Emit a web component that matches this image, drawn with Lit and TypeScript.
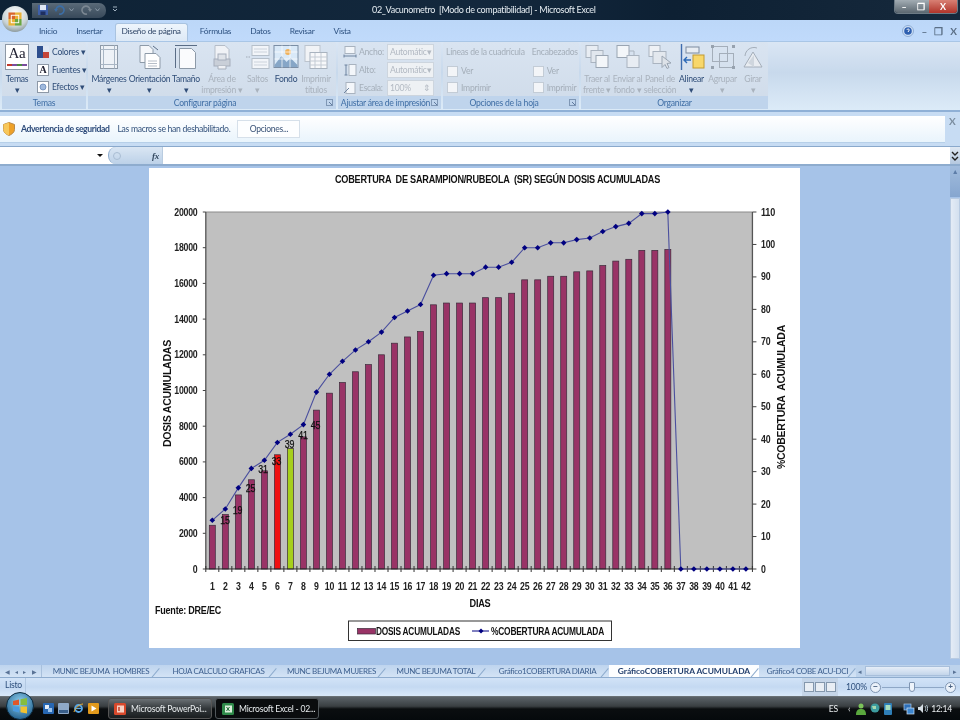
import { LitElement, html, svg, css } from "lit";
import { customElement } from "lit/decorators.js";

const DOSES = [2450,3050,4150,5000,5500,6400,6750,7400,8900,9850,10450,11050,11450,12000,12650,13000,13300,14800,14900,14900,14900,15200,15200,15450,16200,16200,16400,16400,16650,16700,17000,17250,17350,17850,17850,17900];
const COVER = [15,18.5,25,31,33.5,39,41.5,44.5,54.5,60,64,67.5,70,73,77.5,79.5,81.5,90.5,91,91,91,93,93,94.5,99,99,100.5,100.5,101.5,102,104,105.5,106.5,109.5,109.5,110,0,0,0,0,0,0];
const LABELS: [string, number, number][] = [["15",225,524],["19",237.5,514],["25",250.5,492],["31",263,473],["33",276.5,465],["39",289.5,448],["41",303,439],["45",315.5,429]];
const L = 205.8, STEP = 13.015, Y0 = 569, H = 357;
const cx = (i: number) => L + STEP * (i + 0.5);
const yD = (v: number) => Y0 - (v / 20000) * H;
const yC = (v: number) => Y0 - (v / 110) * H;

const ic = {
  orb: html`<svg viewBox="0 0 30 30" width="28" height="28"><defs><radialGradient id="og" cx=".5" cy=".3" r=".75"><stop offset="0" stop-color="#fff"/><stop offset=".65" stop-color="#c9d3d6"/><stop offset="1" stop-color="#7f8d8f"/></radialGradient></defs><circle cx="15" cy="15" r="14" fill="url(#og)"/><rect x="8" y="8" width="7" height="7" fill="#d9662b"/><rect x="15" y="8" width="7" height="7" fill="#e8b23a"/><rect x="8" y="15" width="7" height="7" fill="#e8b23a"/><rect x="15" y="15" width="7" height="7" fill="#6aa63f"/><rect x="11" y="11" width="8" height="8" fill="none" stroke="#fff" stroke-width="1"/></svg>`,
  save: html`<svg viewBox="0 0 10 10" width="10" height="10"><rect width="10" height="10" fill="#3d5fa8"/><rect x="2" y="0" width="6" height="5" fill="#dfe8f5"/><rect x="2.5" y="6.5" width="5" height="3.5" fill="#1e2f60"/></svg>`,
  undo: html`<svg viewBox="0 0 12 10" width="12" height="10"><path d="M2 5a4 4 0 1 1 3 4" fill="none" stroke="#3c6ea6" stroke-width="1.6"/><path d="M0 4h4l-2 3z" fill="#3c6ea6"/></svg>`,
  redo: html`<svg viewBox="0 0 12 10" width="12" height="10"><path d="M10 5a4 4 0 1 0-3 4" fill="none" stroke="#7b8792" stroke-width="1.6"/><path d="M12 4H8l2 3z" fill="#7b8792"/></svg>`,
  chev: html`<svg viewBox="0 0 5 4" width="5" height="4"><path d="M.5 .5L2.500 3 4.500 .5" fill="none" stroke="#8d9ba8"/></svg>`,
  qa: html`<svg viewBox="0 0 6 8" width="6" height="8"><path d="M1 1h4M1 3l2 2 2-2" fill="none" stroke="#9fb0bf" stroke-width="1"/></svg>`,
  aa: html`<svg viewBox="0 0 24 26" width="24" height="26"><rect x=".5" y=".5" width="23" height="25" fill="#fff" stroke="#8d98a6"/><rect x="2" y="20" width="20" height="2" fill="#7a4d9e"/><rect x="2" y="20" width="5" height="2" fill="#c0392b"/><rect x="12" y="20" width="5" height="2" fill="#4a8a3f"/></svg>`,
  colors: html`<svg viewBox="0 0 12 12" width="12" height="12"><rect width="6" height="12" fill="#2e4f8e"/><rect x="6" width="6" height="6" fill="#dfe7f3"/><rect x="6" y="6" width="6" height="6" fill="#c44539"/></svg>`,
  effects: html`<svg viewBox="0 0 12 12" width="12" height="12"><rect x=".5" y=".5" width="11" height="11" fill="#fff" stroke="#8d98a6"/><circle cx="6" cy="6" r="3" fill="#9fb9dd" stroke="#5c7eb0" stroke-width=".7"/></svg>`,
  margins: html`<svg viewBox="0 0 26 26" width="26" height="26"><rect x="4.500" y="1.500" width="17" height="23" fill="#eef2f7" stroke="#8d9aa8"/><path d="M4.500 5.500h17M4.500 20.500h17M7.500 1.500v23M18.500 1.500v23" stroke="#a9b6c4"/></svg>`,
  orient: html`<svg viewBox="0 0 26 26" width="26" height="26"><path d="M3 1.500h9l4 4v13H3z" fill="#f5f7fa" stroke="#8d9aa8"/><path d="M8 9.500h11l4 4v11H8z" fill="#fff" stroke="#8d9aa8"/><path d="M11 17h9M11 19.500h9M11 22h9" stroke="#b6bec8"/><path d="M16 2l5 4" stroke="#5a6d86"/></svg>`,
  size: html`<svg viewBox="0 0 26 26" width="26" height="26"><path d="M2 1.500h22" stroke="#5a6d86"/><path d="M2.500 4v20" stroke="#5a6d86"/><path d="M6.500 4.500h12l4 4v16h-16z" fill="#fafbfd" stroke="#8d9aa8"/></svg>`,
  area: html`<svg viewBox="0 0 26 26" width="26" height="26"><path d="M6 1.500h10l4 4v13H6z" fill="#f0f2f6" stroke="#b5bdc8"/><rect x="5" y="15" width="16" height="7" fill="#c9cfd8" stroke="#a6aebb"/><rect x="9" y="10" width="8" height="6" fill="#dfe3e9" stroke="#a6aebb"/><path d="M9 22v3h8v-3" fill="#eef0f4" stroke="#a6aebb"/></svg>`,
  breaks: html`<svg viewBox="0 0 26 26" width="26" height="26"><rect x="7" y="1.500" width="17" height="10" fill="#f2f5f9" stroke="#b5bfca"/><rect x="7" y="14.500" width="17" height="10" fill="#f2f5f9" stroke="#b5bfca"/><path d="M9 5h13M9 8h13M9 18h13M9 21h13" stroke="#ccd3dc"/><path d="M1 13h4" stroke="#a0aab6" stroke-dasharray="1.500 1"/></svg>`,
  bg: html`<svg viewBox="0 0 26 26" width="26" height="26"><rect x="1" y="1.500" width="24" height="22" fill="#d9e9f8" stroke="#7b8ea5"/><path d="M1.500 21l7-9 5 6 4-4 7 7v2h-23z" fill="#86a6c7"/><circle cx="15" cy="8" r="3" fill="#f0b25c"/><path d="M1.500 8h23M1.500 15h23M9 1.500v22M17 1.500v22" stroke="#fff" stroke-width=".7"/></svg>`,
  titles: html`<svg viewBox="0 0 26 26" width="26" height="26"><rect x="2" y="1.500" width="15" height="16" fill="#f1f3f6" stroke="#bcc4ce"/><rect x="7" y="8.500" width="17" height="16" fill="#f7f8fa" stroke="#a9b3bf"/><path d="M7 13h17M7 17h17M7 21h17M12 9v15M18 9v15" stroke="#c4cbd4"/></svg>`,
  width: html`<svg viewBox="0 0 14 12" width="14" height="12"><rect x="2" y=".5" width="10" height="7" fill="#f3f6fa" stroke="#a9b3bf"/><path d="M1 10h12M1 8.500v3M13 8.500v3" stroke="#6f84a0"/></svg>`,
  height: html`<svg viewBox="0 0 14 12" width="14" height="12"><rect x="6" y=".5" width="7" height="11" fill="#f3f6fa" stroke="#a9b3bf"/><path d="M3 1v10M1.500 1h3M1.500 11h3" stroke="#6f84a0"/></svg>`,
  scale: html`<svg viewBox="0 0 14 12" width="14" height="12"><rect x="3" y=".5" width="9" height="11" fill="#f3f6fa" stroke="#a9b3bf"/><path d="M1 11l5-5" stroke="#6f84a0"/></svg>`,
  front: html`<svg viewBox="0 0 26 26" width="26" height="26"><rect x="2" y="1.500" width="12" height="12" fill="#e8edf3" stroke="#aab4c0"/><rect x="7" y="6.500" width="12" height="12" fill="#e1e7ee" stroke="#aab4c0"/><rect x="12" y="11.500" width="12" height="12" fill="#f3f6f9" stroke="#9aa5b2"/></svg>`,
  back: html`<svg viewBox="0 0 26 26" width="26" height="26"><rect x="2" y="1.500" width="12" height="12" fill="#f3f6f9" stroke="#9aa5b2"/><rect x="12" y="11.500" width="12" height="12" fill="#e8edf3" stroke="#aab4c0"/><path d="M14 7h5v5" fill="none" stroke="#aab4c0"/></svg>`,
  pane: html`<svg viewBox="0 0 26 26" width="26" height="26"><rect x="2" y="1.500" width="11" height="11" fill="#eef1f5" stroke="#aab4c0"/><rect x="6" y="7.500" width="13" height="12" fill="#e3e8ee" stroke="#aab4c0"/><path d="M15 12l9 7-4 .5 2 4-2 1-2-4-3 3z" fill="#dde2e8" stroke="#9aa5b2"/></svg>`,
  align: html`<svg viewBox="0 0 26 26" width="26" height="26"><path d="M2.500 0v26" stroke="#3e6cae" stroke-width="1.400"/><rect x="7" y="3" width="13" height="6" fill="#e8edf3" stroke="#7d8ba0"/><rect x="14" y="11" width="11" height="13" fill="#f8d76a" stroke="#c29a31"/><path d="M12 16H6m2-3-3 3 3 3" fill="none" stroke="#2d6ab7" stroke-width="1.400"/></svg>`,
  group: html`<svg viewBox="0 0 26 26" width="26" height="26"><rect x="2.500" y="2.500" width="15" height="15" fill="none" stroke="#a4aeba"/><rect x="9.500" y="9.500" width="14" height="14" fill="none" stroke="#a4aeba"/><g fill="#97a2af"><rect x="1" y="1" width="3" height="3"/><rect x="22" y="1" width="3" height="3"/><rect x="1" y="22" width="3" height="3"/><rect x="22" y="22" width="3" height="3"/></g></svg>`,
  rotate: html`<svg viewBox="0 0 26 26" width="26" height="26"><path d="M13 8l9 15H4z" fill="#e8ecf1" stroke="#a4aeba"/><path d="M5 12a9 9 0 0 1 12-8" fill="none" stroke="#a4aeba"/><path d="M8 19l6-8v12" fill="#cfd6de"/></svg>`,
  launcher: html`<svg viewBox="0 0 7 7" width="7" height="7"><rect x=".5" y=".5" width="6" height="6" fill="none" stroke="#7f97b5"/><path d="M3 3l3 3" stroke="#5f7a9e"/></svg>`,
  shield: html`<svg viewBox="0 0 12 14" width="12" height="14"><path d="M6 .5l5.500 2v5c0 3-3 5-5.500 6-2.500-1-5.500-3-5.500-6v-5z" fill="#eea129" stroke="#b88a4a"/><path d="M6 .5v13c-2.500-1-5.500-3-5.500-6v-5z" fill="#f7c75a"/></svg>`,
  fx: html`<svg viewBox="0 0 10 10" width="10" height="10"><circle cx="5" cy="5" r="3.500" fill="none" stroke="#a9bdd3"/></svg>`,
  help: html`<svg viewBox="0 0 12 12" width="12" height="12"><circle cx="6" cy="6" r="5.500" fill="#cfe0f5" stroke="#8fadd4"/><circle cx="6" cy="6" r="3.800" fill="#2e5fb0"/><path d="M4.800 4.800c.5-1.200 2.500-1 2.500.2 0 1-1.300 1-1.300 2" stroke="#fff" fill="none"/></svg>`,
  expand: html`<svg viewBox="0 0 8 10" width="8" height="10"><path d="M1 1l3 3 3-3M1 6l3 3 3-3" fill="none" stroke="#222" stroke-width="1.400"/></svg>`,
  start: html`<svg viewBox="0 0 28 28" width="28" height="28"><defs><radialGradient id="st" cx=".5" cy=".35" r=".7"><stop offset="0" stop-color="#8fd0ee"/><stop offset="1" stop-color="#1c5a89"/></radialGradient></defs><circle cx="14" cy="14" r="13.500" fill="url(#st)" stroke="#0c2a3e"/><path d="M7 9l6-1.500V13H7z" fill="#e1572a"/><path d="M14.500 7.200L21 6v7h-6.500z" fill="#86bd3f"/><path d="M7 14.500h6v6L7 19z" fill="#4a9adf"/><path d="M14.500 14.500H21v7l-6.500-1.200z" fill="#f2c230"/></svg>`,
  ql1: html`<svg viewBox="0 0 11 11" width="11" height="11"><rect width="11" height="11" rx="1" fill="#2767b3"/><rect x="2" y="2" width="4" height="4" fill="#e6eef8"/><rect x="5" y="5" width="4" height="4" fill="#9dc3ea"/></svg>`,
  ql2: html`<svg viewBox="0 0 11 11" width="11" height="11"><rect width="11" height="11" rx="1" fill="#8fa9c7"/><rect x="1" y="7" width="9" height="3" fill="#3a5f8a"/></svg>`,
  ie: html`<svg viewBox="0 0 11 11" width="11" height="11"><circle cx="5.500" cy="5.500" r="3.500" fill="none" stroke="#59a8e8" stroke-width="1.800"/><path d="M2.500 5.500h6" stroke="#59a8e8" stroke-width="1.300"/><path d="M1 9c1-4 6-8 9-8" fill="none" stroke="#f0b030"/></svg>`,
  ql4: html`<svg viewBox="0 0 11 11" width="11" height="11"><rect width="11" height="11" rx="1" fill="#e29a1c"/><path d="M3.500 2.500l5 3-5 3z" fill="#fff"/></svg>`,
  ppt: html`<svg viewBox="0 0 12 12" width="12" height="12"><rect width="12" height="12" rx="1.500" fill="#d8492c"/><rect x="3" y="2.500" width="7" height="7" fill="#f6d0c3"/><path d="M5 4v4" stroke="#c2331a" stroke-width="1.400"/></svg>`,
  xl: html`<svg viewBox="0 0 12 12" width="12" height="12"><rect width="12" height="12" rx="1.500" fill="#2f8a4a"/><rect x="3" y="2.500" width="7" height="7" fill="#dcefdc"/><path d="M4.500 4l3 4m0-4l-3 4" stroke="#1d6a34"/></svg>`,
  user: html`<svg viewBox="0 0 10 12" width="10" height="12"><circle cx="5" cy="3" r="2.500" fill="#7cc35a"/><path d="M0 12c0-5 2-6 5-6s5 1 5 6z" fill="#5aa83e"/></svg>`,
  globe: html`<svg viewBox="0 0 10 10" width="10" height="10"><circle cx="5" cy="5" r="4.500" fill="#3d9c9f"/><path d="M2 3h4v3H3z" fill="#a7d8b0"/></svg>`,
  phone: html`<svg viewBox="0 0 8 12" width="8" height="12"><rect width="8" height="12" rx="1" fill="#2f7fb8"/><rect x="1.500" y="2" width="5" height="5" fill="#a9e0c0"/></svg>`,
  net: html`<svg viewBox="0 0 12 12" width="12" height="12"><rect x="1" y="1" width="7" height="6" fill="#2e6fb8" stroke="#a9c8e8" stroke-width=".7"/><rect x="4" y="5" width="7" height="6" fill="#3d86cf" stroke="#d3e4f5" stroke-width=".7"/></svg>`,
  vol: html`<svg viewBox="0 0 11 11" width="11" height="11"><path d="M1 4h2l3-3v9L3 7H1z" fill="#d5dde3"/><path d="M8 3c1 1.500 1 3.500 0 5M9.500 2c1.500 2 1.500 5 0 7" stroke="#b6c4ce" fill="none"/></svg>`,
};

@customElement("x-chart")
class XChart extends LitElement {
  static styles = css`
    :host { display: block; width: 651px; height: 480px; background: #fff; }
    svg { display: block; }
    text { font-family: "Liberation Sans", Arial, sans-serif; font-weight: 700; fill: #222; white-space: pre; }
    .n { font-size: 10px; }
    .v { font-size: 11px; font-weight: 400; fill: #111; stroke: #111; stroke-width: .25px; }
    .t { font-size: 10px; fill: #111; }
  `;
  num(x: number, y: number, s: string, a: string) {
    return svg`<text class="n" x=${x} y=${y} text-anchor=${a} textLength=${s.length * 4.65} lengthAdjust="spacingAndGlyphs">${s}</text>`;
  }
  ttl(x: number, y: number, s: string, w: number, a = "start") {
    return svg`<text class="t" x=${x} y=${y} text-anchor=${a} textLength=${w} lengthAdjust="spacingAndGlyphs">${s}</text>`;
  }
  render() {
    const R = L + STEP * 42;
    const pts = COVER.map((c, i) => `${cx(i).toFixed(1)},${yC(c).toFixed(1)}`).join(" ");
    return html`<svg viewBox="149 168 651 480" width="651" height="480">
      <rect x=${L} y="212" width=${R - L} height=${H} fill="#c0c0c0"/>
      <path d="M${L} 212H${R}" stroke="#8a8a8a"/>
      ${DOSES.map((d, i) => svg`<rect x=${cx(i) - 3} y=${yD(d)} width="6" height=${Y0 - yD(d)} fill=${i === 5 ? "#f01010" : i === 6 ? "#a6cf1c" : "#993366"} stroke="#3b2a3a" stroke-width=".7"/>`)}
      <path d="M${L} 212V569M${R} 212V569" stroke="#555" stroke-width="1.300"/>
      <path d="M${L} 569H${R}" stroke="#222" stroke-width="1.100"/>
      ${Array.from({ length: 11 }, (_, i) => svg`<path d="M${L - 3} ${Y0 - (i * H) / 10}h3" stroke="#444"/>`)}
      ${Array.from({ length: 12 }, (_, i) => svg`<path d="M${R} ${Y0 - (i * H) / 11}h4" stroke="#444"/>`)}
      ${Array.from({ length: 43 }, (_, i) => svg`<path d="M${L + STEP * i} 566v6" stroke="#333"/>`)}
      <polyline points=${pts} fill="none" stroke="#4a4f9e" stroke-width="1.100"/>
      ${COVER.map((c, i) => svg`<path d="M${cx(i)} ${yC(c) - 2.800}l2.800 2.800-2.800 2.800-2.800-2.800z" fill="#000080"/>`)}
      ${LABELS.map(([s, x, y]) => svg`<text class="v" x=${x} y=${y} text-anchor="middle" textLength="9.500" lengthAdjust="spacingAndGlyphs">${s}</text>`)}
      ${Array.from({ length: 11 }, (_, i) => this.num(197.5, Y0 - (i * H) / 10 + 3.500, String(i * 2000), "end"))}
      ${Array.from({ length: 12 }, (_, i) => this.num(761, Y0 - (i * H) / 11 + 3.500, String(i * 10), "start"))}
      ${Array.from({ length: 42 }, (_, i) => this.num(cx(i), 590, String(i + 1), "middle"))}
      ${this.ttl(335, 183, "COBERTURA  DE SARAMPION/RUBEOLA  (SR) SEGÚN DOSIS ACUMULADAS", 325)}
      <g transform="translate(170.500 393.500) rotate(-90)">${this.ttl(0, 0, "DOSIS ACUMULADAS", 107, "middle")}</g>
      <g transform="translate(785 397) rotate(-90)">${this.ttl(0, 0, "%COBERTURA  ACUMULADA", 144, "middle")}</g>
      ${this.ttl(480, 607, "DIAS", 21, "middle")}
      ${this.ttl(155, 614, "Fuente: DRE/EC", 66)}
      <rect x="348.500" y="621" width="263" height="19.500" fill="#fff" stroke="#333"/>
      <rect x="357.500" y="628.500" width="18" height="5.500" fill="#993366" stroke="#3b2a3a" stroke-width=".7"/>
      ${this.ttl(376, 635, "DOSIS ACUMULADAS", 84)}
      <path d="M472 631h17" stroke="#000080"/>
      <path d="M481 628.500l2.500 2.500-2.500 2.500-2.500-2.500z" fill="#000080"/>
      ${this.ttl(491, 635, "%COBERTURA ACUMULADA", 113)}
    </svg>`;
  }
}

const BIG = [
  { w: 38, i: ic.margins, a: "Márgenes", b: "▾", on: 1 },
  { w: 43, i: ic.orient, a: "Orientación", b: "▾", on: 1 },
  { w: 30, i: ic.size, a: "Tamaño", b: "▾", on: 1 },
  { w: 42, i: ic.area, a: "Área de", b: "impresión ▾", on: 0 },
  { w: 29, i: ic.breaks, a: "Saltos", b: "▾", on: 0 },
  { w: 28, i: ic.bg, a: "Fondo", b: "", on: 1 },
  { w: 32, i: ic.titles, a: "Imprimir", b: "títulos", on: 0 },
];
const ARR = [
  { w: 30, i: ic.front, a: "Traer al", b: "frente ▾", on: 0 },
  { w: 31, i: ic.back, a: "Enviar al", b: "fondo ▾", on: 0 },
  { w: 34, i: ic.pane, a: "Panel de", b: "selección", on: 0 },
  { w: 29, i: ic.align, a: "Alinear", b: "▾", on: 1 },
  { w: 33, i: ic.group, a: "Agrupar", b: "▾", on: 0 },
  { w: 28, i: ic.rotate, a: "Girar", b: "▾", on: 0 },
];
const SHEETS = [
  { t: "MUNIC BEJUMA  HOMBRES", w: 118 },
  { t: "HOJA CALCULO GRAFICAS", w: 117 },
  { t: "MUNC BEJUMA MUJERES", w: 109 },
  { t: "MUNC BEJUMA TOTAL", w: 100 },
  { t: "Gráfico1COBERTURA DIARIA", w: 123 },
  { t: "GráficoCOBERTURA ACUMULADA", w: 150, on: 1 },
  { t: "Gráfico4 COBE ACU-DCI", w: 97 },
];

@customElement("app-root")
class AppRoot extends LitElement {
  static styles = css`
    :host { display: block; width: 960px; height: 720px; overflow: hidden; font-family: Lato, "Liberation Sans", sans-serif; font-size: 8.6px; letter-spacing: -.25px; color: #3b5578; filter: blur(.35px); }
    .win { display: flex; flex-direction: column; height: 720px; background: #a6c3e8; }
    .title { height: 20px; flex: none; display: flex; align-items: center; background: linear-gradient(90deg, #0e2235, #13283d 50%, #0d2033 70%, #16293c); color: #e6edf2; font-size: 9px; position: relative; }
    .orb { position: absolute; left: 1px; top: 5px; }
    .qat { margin-left: 32px; height: 15px; display: flex; align-items: center; gap: 3px; padding: 0 6px 0 6px; background: linear-gradient(#5a6a78, #38495a); border-radius: 0 7px 7px 0; }
    .qat svg:nth-child(1), .qat svg:nth-child(3) { margin-right: 3px; }
    .qa { margin-left: 6px; display: flex; }
    .caption { position: absolute; left: 372px; top: 4px; white-space: pre; letter-spacing: -.32px; }
    .wbtn { margin-left: auto; margin-right: 2px; align-self: flex-start; display: flex; height: 13px; border: 1px solid #6d7b86; border-top: 0; border-radius: 0 0 4px 4px; overflow: hidden; }
    .wbtn span { display: flex; align-items: center; justify-content: center; background: linear-gradient(#a2acb3, #5b6770); color: #fff; font-size: 9px; font-weight: 700; }
    .wbtn .m { width: 18px; } .wbtn .r { width: 16px; }
    .wbtn .x { width: 28px; background: linear-gradient(#d88074, #b0342a); }
    .tabs { height: 21px; flex: none; display: flex; align-items: flex-end; padding-left: 29.5px; background: linear-gradient(#bcd7f8, #c0dafb); color: #2d5180; font-size: 8.4px; }
    .tab { padding: 0 9.5px; height: 17px; line-height: 15px; white-space: nowrap; }
    .tab.on { background: linear-gradient(#eef5fc, #dde9f6); border: 1px solid #a9c3e0; border-bottom: 0; border-radius: 3px 3px 0 0; color: #33496a; padding: 0 6px; margin: 0 2.500px; }
    .help { margin-left: auto; display: flex; gap: 7px; align-items: center; align-self: center; padding-right: 3px; color: #5b6f86; font-size: 10px; font-weight: 700; letter-spacing: 0; }
    .ribbon { height: 71px; flex: none; display: flex; padding: 0 2px 1px 2px; gap: 2px; background: linear-gradient(#dae6f4, #c8d9ec 45%, #dcebf8); border-bottom: 2px solid #8fb0d6; border-top: 1px solid #a9c6e6; box-sizing: border-box; }
    .grp { display: flex; flex-direction: column; background: linear-gradient(#d9e4f1, #cfdbe9); border-radius: 2px; }
    .gb { flex: 1; display: flex; min-height: 0; padding-top: 2px; }
    .gl { height: 13px; flex: none; background: #bfd4ec; color: #3f6ea5; display: flex; align-items: center; justify-content: center; position: relative; font-size: 8.6px; white-space: nowrap; }
    .gl.p { padding-right: 14px; }
    .gl.q { padding-right: 8px; }
    .gl svg { position: absolute; right: 3px; top: 3px; }
    .big { display: flex; flex-direction: column; align-items: center; flex: none; line-height: 10.500px; text-align: center; white-space: nowrap; color: #a9b2bd; }
    .big.on { color: #2f4d78; }
    .big svg { margin-bottom: 4px; }
    .aa { position: relative; width: 24px; height: 26px; margin-bottom: 4px; }
    .aa svg { display: block; margin: 0; }
    .aa b { position: absolute; left: 0; right: 0; top: 1px; text-align: center; font: 400 15px "Liberation Serif", serif; color: #223; }
    .smalls { display: flex; flex-direction: column; gap: 3.500px; margin-left: 7px; padding-top: 1px; }
    .sm { display: flex; align-items: center; gap: 3px; height: 14px; color: #2f4d78; white-space: nowrap; }
    .lettera { width: 12px; height: 12px; background: #fff; border: 1px solid #8d98a6; box-sizing: border-box; font: 700 10px/10px "Liberation Serif", serif; color: #223; text-align: center; }
    .fld { display: flex; flex-direction: column; gap: 1px; padding: 0 0 0 5px; }
    .fr { display: flex; align-items: center; height: 17px; color: #a4aeb9; gap: 2px; }
    .fr > span { width: 26px; }
    .inp { width: 47px; height: 16px; box-sizing: border-box; background: #eef1f4; border: 1px solid #cdd5de; color: #b2b9c2; line-height: 14px; padding: 0 2px; white-space: nowrap; display: flex; justify-content: space-between; }
    .opc { display: flex; flex-direction: column; color: #a4aeb9; white-space: nowrap; padding-top: 3px; }
    .opc .hd { height: 16px; }
    .ck { display: flex; align-items: center; gap: 3px; height: 17px; padding-left: 1px; }
    .ck i { width: 9px; height: 9px; background: #f3f5f8; border: 1px solid #c3ccd6; }
    .msg-wrap { height: 35px; flex: none; display: flex; align-items: center; background: #c7dcf3; border-bottom: 1px solid #8aa9cc; box-sizing: border-box; padding-top: 1px; }
    .msg { width: 945px; height: 27px; box-sizing: border-box; background: linear-gradient(#fff, #e9f4fc); border-bottom: 1px solid #b6cfe8; display: flex; align-items: center; padding-left: 3px; color: #32507a; white-space: nowrap; letter-spacing: -.3px; }
    .msg b { margin-left: 6px; color: #2c4a7a; font-weight: 700; letter-spacing: -.36px; }
    .msg span { margin-left: 8px; }
    .btn { margin-left: 7px; width: 63px; height: 18px; box-sizing: border-box; background: #fdfeff; border: 1px solid #d6e0ea; text-align: center; line-height: 16px; color: #3a5378; }
    .close { margin-left: 4px; align-self: flex-start; margin-top: 2px; color: #7b8d9f; font-size: 10px; font-weight: 700; width: 11px; }
    .fbar { height: 19px; flex: none; display: flex; background: #fff; border-bottom: 2px solid #8eacce; box-sizing: border-box; }
    .name { width: 108px; position: relative; }
    .name::after { content: ""; position: absolute; right: 5px; top: 7px; border: 3px solid transparent; border-top: 3px solid #111; }
    .fxb { width: 54px; background: linear-gradient(#dae6f3, #bcd1e8); border-radius: 8px 0 0 8px; border-left: 1px solid #8eacce; display: flex; align-items: center; justify-content: space-between; padding: 0 3px 0 3px; box-sizing: border-box; font: italic 700 9px "Liberation Serif", serif; color: #33485f; }
    .fin { flex: 1; border-left: 1px solid #b9cce0; }
    .exp { width: 10px; background: linear-gradient(#dfe8f3, #b4c8df); display: flex; align-items: center; justify-content: center; }
    .main { flex: 1; display: flex; min-height: 0; }
    .canvas { flex: 1; padding: 2px 0 0 149px; }
    .vs { width: 10px; flex: none; display: flex; flex-direction: column; }
    .vsb { height: 31px; background: linear-gradient(#a1bcdd, #86a6cf); color: #5d7da8; font-size: 7px; text-align: center; line-height: 10px; }
    .vst { flex: 1; margin: 1px 0 6px; background: linear-gradient(90deg, #e4ecf6, #d3e0ef); border: 1px solid #b8cbe2; box-sizing: border-box; }
    .sheets { height: 13px; flex: none; display: flex; align-items: stretch; background: linear-gradient(#bed4ee, #d3e3f5); color: #3d5f8e; font-size: 8px; letter-spacing: -.34px; border-bottom: 1px solid #8eacce; box-sizing: border-box; white-space: pre; }
    .nav { width: 42px; flex: none; display: flex; align-items: center; justify-content: space-around; padding: 0 2px; box-sizing: border-box; color: #5a7396; font-size: 6px; border-right: 1px solid #a8c0dc; }
    .sh { flex: none; text-align: center; line-height: 12px; position: relative; overflow: hidden; }
    .sh::after { content: ""; position: absolute; right: 4px; top: 2px; height: 12px; width: 1px; background: #8eacce; transform: rotate(40deg); }
    .sh.on { background: #fdfeff; color: #24406e; font-weight: 700; font-size: 8.4px; letter-spacing: 0; }
    .hs { flex: 1; display: flex; align-items: center; background: #bdd3ec; color: #5a7396; font-size: 7px; padding: 0 3px 0 2px; gap: 3px; }
    .hs i { flex: 1; height: 10px; background: linear-gradient(#e6eef8, #c3d5ea); border: 1px solid #a8bfdb; box-sizing: border-box; }
    .status { height: 18px; flex: none; display: flex; align-items: center; background: linear-gradient(#d2e3f7, #c4d9f2 50%, #dae9fa); color: #2e4f7c; font-size: 8.6px; }
    .listo { width: 26px; padding-left: 5px; box-sizing: border-box; border-right: 1px solid #b2c8e2; height: 100%; line-height: 15px; flex: none; }
    .views { margin-left: auto; height: 100%; display: flex; align-items: center; gap: 1px; padding: 0 2px; background: #c5d5e8; }
    .views i { width: 10px; height: 10px; border: 1px solid #8497ac; background: #e9eef4; box-sizing: border-box; }
    .zoom { margin-left: 8px; width: 20px; }
    .zb { width: 9px; height: 9px; border: 1px solid #7f95b2; border-radius: 50%; background: #eaf1fa; color: #4a6282; font: 700 8px/8px "Liberation Sans", sans-serif; text-align: center; flex: none; }
    .slider { width: 62px; height: 1px; background: #8ea7c6; margin: 0 1px; position: relative; }
    .slider::after { content: ""; position: absolute; left: 27px; top: -5px; width: 6px; height: 10px; background: #eef4fb; border: 1px solid #7f95b2; box-sizing: border-box; border-radius: 1px 1px 3px 3px; }
    .task { height: 24px; flex: none; display: flex; align-items: center; background: linear-gradient(#5b6268 0, #3a3f42 40%, #0b0e10 52%, #05090c); border-top: 1px solid #6a7176; box-sizing: border-box; color: #e8ecee; font-size: 8.6px; white-space: nowrap; position: relative; }
    .st { position: absolute; left: 6px; top: -5px; }
    .ql { display: flex; gap: 4px; margin-left: 43px; align-items: center; }
    .tb { height: 21px; width: 104px; box-sizing: border-box; display: flex; align-items: center; gap: 5px; padding-left: 5px; border-radius: 3px; flex: none; }
    .tb.a { margin-left: 9px; background: linear-gradient(#6b7175, #33383b 50%, #1a1e20); border: 1px solid #555; }
    .tb.b { margin-left: 3px; background: #0a0c0e; border: 1px solid #50565a; padding-left: 6px; }
    .tray { margin-left: auto; display: flex; align-items: center; padding-right: 8px; }
  `;
  big(b: any) {
    return html`<div class="big ${b.on ? "on" : ""}" style="width:${b.w}px">${b.i}<span>${b.a}</span><span>${b.b || "\u00a0"}</span></div>`;
  }
  render() {
    return html`<div class="win">
      <div class="title">
        <div class="qat">${ic.save}${ic.undo}${ic.chev}${ic.redo}${ic.chev}</div>
        <div class="qa">${ic.qa}</div>
        <span class="caption">02_Vacunometro  [Modo de compatibilidad] - Microsoft Excel</span>
        <div class="wbtn"><span class="m">–</span><span class="r">❐</span><span class="x">X</span></div>
        <div class="orb">${ic.orb}</div>
      </div>
      <div class="tabs">
        <div class="tab">Inicio</div><div class="tab">Insertar</div><div class="tab on">Diseño de página</div>
        <div class="tab">Fórmulas</div><div class="tab">Datos</div><div class="tab">Revisar</div><div class="tab">Vista</div>
        <div class="help">${ic.help}<span>–</span><span>❐</span><span>X</span></div>
      </div>
      <div class="ribbon">
        <div class="grp" style="width:84px"><div class="gb">
          <div class="big on" style="width:26px;margin-left:2px"><div class="aa">${ic.aa}<b>Aa</b></div><span>Temas</span><span>▾</span></div>
          <div class="smalls">
            <div class="sm">${ic.colors}Colores ▾</div>
            <div class="sm"><span class="lettera">A</span>Fuentes ▾</div>
            <div class="sm">${ic.effects}Efectos ▾</div>
          </div></div><div class="gl">Temas</div></div>
        <div class="grp" style="width:248px"><div class="gb" style="padding-left:2px">${BIG.map((b) => this.big(b))}</div><div class="gl p">Configurar página${ic.launcher}</div></div>
        <div class="grp" style="width:103px"><div class="gb"><div class="fld">
          <div class="fr">${ic.width}<span>Ancho:</span><div class="inp">Automátic<em style="font-style:normal">▾</em></div></div>
          <div class="fr">${ic.height}<span>Alto:</span><div class="inp">Automátic<em style="font-style:normal">▾</em></div></div>
          <div class="fr">${ic.scale}<span>Escala:</span><div class="inp">100%<em style="font-style:normal">⇕</em></div></div>
        </div></div><div class="gl q">Ajustar área de impresión${ic.launcher}</div></div>
        <div class="grp" style="width:136px"><div class="gb" style="padding-left:3px;gap:7px">
          <div class="opc"><div class="hd">Líneas de la cuadrícula</div><div class="ck"><i></i>Ver</div><div class="ck"><i></i>Imprimir</div></div>
          <div class="opc"><div class="hd">Encabezados</div><div class="ck"><i></i>Ver</div><div class="ck"><i></i>Imprimir</div></div>
        </div><div class="gl p">Opciones de la hoja${ic.launcher}</div></div>
        <div class="grp" style="width:187px"><div class="gb" style="padding-left:1px">${ARR.map((b) => this.big(b))}</div><div class="gl">Organizar</div></div>
      </div>
      <div class="msg-wrap">
        <div class="msg">${ic.shield}<b>Advertencia de seguridad</b><span>Las macros se han deshabilitado.</span><div class="btn">Opciones...</div></div>
        <div class="close">X</div>
      </div>
      <div class="fbar"><div class="name"></div><div class="fxb">${ic.fx}<span>fx</span></div><div class="fin"></div><div class="exp">${ic.expand}</div></div>
      <div class="main">
        <div class="canvas"><x-chart></x-chart></div>
        <div class="vs"><div class="vsb">▲</div><div class="vst"></div></div>
      </div>
      <div class="sheets">
        <div class="nav"><span>◀</span><span>◂</span><span>▸</span><span>▶</span></div>
        ${SHEETS.map((s) => html`<div class="sh ${s.on ? "on" : ""}" style="width:${s.w}px">${s.t}</div>`)}
        <div class="hs"><span>◂</span><i></i><span>▸</span></div>
      </div>
      <div class="status">
        <div class="listo">Listo</div>
        <div class="views"><i></i><i></i><i></i></div>
        <div class="zoom">100%</div>
        <div style="width:4px"></div>
        <div class="zb">−</div><div class="slider"></div><div class="zb">+</div>
        <div style="width:4px"></div>
      </div>
      <div class="task">
        <div class="st">${ic.start}</div>
        <div class="ql">${ic.ql1}${ic.ql2}${ic.ie}${ic.ql4}</div>
        <div class="tb a">${ic.ppt}<span>Microsoft PowerPoi...</span></div>
        <div class="tb b">${ic.xl}<span>Microsoft Excel - 02...</span></div>
        <div class="tray"><span style="margin-right:10px">ES</span><span style="margin-right:6px">‹</span><span style="display:flex;gap:4px;margin-right:11px">${ic.user}${ic.globe}${ic.phone}</span><span style="display:flex;gap:2px;margin-right:3px">${ic.net}${ic.vol}</span><span>12:14</span></div>
      </div>
    </div>`;
  }
}
